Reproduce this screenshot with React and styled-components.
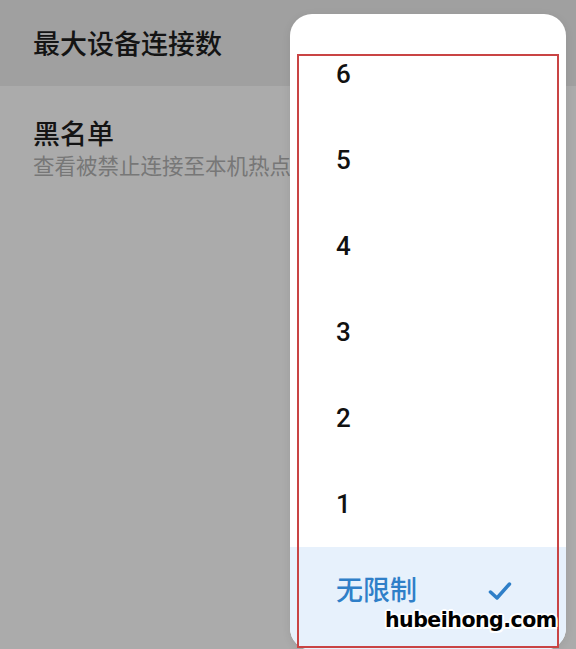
import React from 'react';
import styled, { createGlobalStyle } from 'styled-components';

const GlobalStyle = createGlobalStyle`
  html, body {
    margin: 0;
    padding: 0;
    background: #ababab;
  }
  body {
    font-family: Roboto, "Noto Sans CJK SC", sans-serif;
  }
`;

const Screen = styled.div`
  position: relative;
  width: 576px;
  height: 649px;
  overflow: hidden;
  background: #ababab;
`;

const SettingRow = styled.div`
  display: flex;
  flex-direction: column;
  justify-content: ${p => (p.$center ? 'center' : 'flex-start')};
  height: ${p => p.$height}px;
  padding: ${p => p.$padTop || 0}px 33px 0;
  box-sizing: border-box;
  background: ${p => p.$bg};
`;

const Title = styled.div`
  font-family: "Noto Sans CJK SC", sans-serif;
  font-size: 27px;
  font-weight: 500;
  line-height: 36px;
  color: #141414;
  white-space: nowrap;
`;

// the popup covers the end of this line, so it is clipped where the popup starts
const Subtitle = styled.div`
  font-family: "Noto Sans CJK SC", sans-serif;
  font-size: 21.5px;
  line-height: 28px;
  color: #777;
  white-space: nowrap;
  max-width: 257px;
  overflow: hidden;
`;

const Popup = styled.div`
  position: absolute;
  left: 290px;
  top: 14px;
  width: 276px;
  height: 636px;
  background: #fff;
  border-radius: 22px;
  overflow: hidden;
  display: flex;
  flex-direction: column;
  padding-top: 17px;
  box-sizing: border-box;
  box-shadow: 0 2px 10px rgba(0, 0, 0, 0.08);
`;

const Option = styled.div`
  display: flex;
  justify-content: space-between;
  height: 86px;
  flex: ${p => (p.$selected ? 1 : 'none')};
  align-items: ${p => (p.$selected ? 'flex-start' : 'center')};
  padding: ${p => (p.$selected ? '26px 54px 0 46px' : '0 54px 0 46px')};
  box-sizing: border-box;
  background: ${p => (p.$selected ? '#e7f1fc' : 'transparent')};
  color: ${p => (p.$selected ? '#2f7fc8' : '#111')};
  font-size: ${p => (p.$selected ? 27 : 26)}px;
  font-weight: 500;
  line-height: 36px;
`;

const CheckMark = styled.svg`
  width: 24px;
  height: 20px;
  margin-top: 8px;
`;

const Annotation = styled.div`
  position: absolute;
  left: 297px;
  top: 54px;
  width: 262px;
  height: 594px;
  border: 2px solid #c94444;
  box-sizing: border-box;
  pointer-events: none;
`;

const Watermark = styled.div`
  position: absolute;
  left: 385px;
  top: 608px;
  font-family: "DejaVu Sans", sans-serif;
  font-weight: 700;
  font-size: 20.5px;
  letter-spacing: -0.5px;
  color: #000;
  text-shadow:
    2px 0 0 #fff, -2px 0 0 #fff, 0 2px 0 #fff, 0 -2px 0 #fff,
    1.5px 1.5px 0 #fff, -1.5px -1.5px 0 #fff, 1.5px -1.5px 0 #fff, -1.5px 1.5px 0 #fff;
`;

const options = ['6', '5', '4', '3', '2', '1'];

export default function App() {
  return (
    <Screen>
      <GlobalStyle />
      <SettingRow $height={86} $bg="#a0a0a0" $center>
        <Title>最大设备连接数</Title>
      </SettingRow>
      <SettingRow $height={563} $bg="#ababab" $padTop={29}>
        <Title>黑名单</Title>
        <Subtitle>查看被禁止连接至本机热点</Subtitle>
      </SettingRow>

      <Popup>
        {options.map(n => (
          <Option key={n}>{n}</Option>
        ))}
        <Option $selected>
          <span>无限制</span>
          <CheckMark viewBox="0 0 24 20">
            <path
              d="M2.5 11 L9 17 L21.5 3"
              fill="none"
              stroke="#2f7fc8"
              strokeWidth="3.5"
              strokeLinecap="round"
              strokeLinejoin="round"
            />
          </CheckMark>
        </Option>
      </Popup>

      <Annotation />
      <Watermark>hubeihong.com</Watermark>
    </Screen>
  );
}
